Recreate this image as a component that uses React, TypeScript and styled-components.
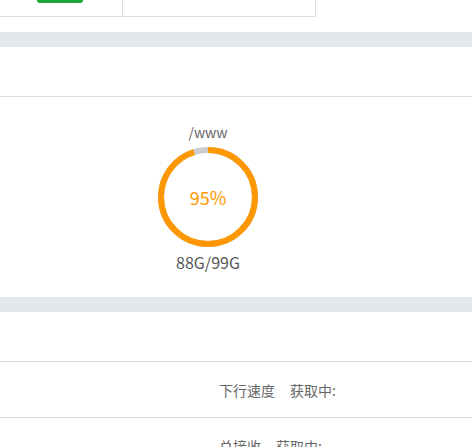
import React from "react";
import styled, { createGlobalStyle } from "styled-components";

const Global = createGlobalStyle`
  html, body { margin: 0; padding: 0; background: #fff; }
  body { font-family: "Noto Sans CJK SC", "Noto Sans", sans-serif; color: #666; }
`;

const Page = styled.div`
  width: 472px;
  height: 447px;
  overflow: hidden;
  display: flex;
  flex-direction: column;
`;

const TopTable = styled.div`
  width: 315px;
  height: 16px;
  display: grid;
  grid-template-columns: 123px 1fr;
  border-bottom: 1px solid #ddd;
  border-right: 1px solid #ddd;
  flex-shrink: 0;
`;

const Cell = styled.div<{ $divider?: boolean }>`
  border-right: ${(p) => (p.$divider ? "1px solid #ddd" : "none")};
`;

const GreenBar = styled.div`
  margin-left: 37px;
  width: 46px;
  height: 3px;
  background: #20a53a;
  border-radius: 0 0 3px 3px;
`;

const Spacer = styled.div<{ $h: number }>`
  height: ${(p) => p.$h}px;
  flex-shrink: 0;
`;

const Band = styled.div`
  height: 15px;
  background: #e4e8ec;
  flex-shrink: 0;
`;

const TitleBar = styled.div<{ $h: number }>`
  height: ${(p) => p.$h}px;
  border-bottom: 1px solid #ddd;
  flex-shrink: 0;
`;

const DiskArea = styled.div`
  height: 200px;
  display: flex;
  flex-direction: column;
  align-items: center;
  flex-shrink: 0;
`;

const DiskItem = styled.div`
  width: 120px;
  margin-left: -56px;
  display: flex;
  flex-direction: column;
  align-items: center;
`;

const DiskPath = styled.div`
  font-size: 14px;
  line-height: 20px;
  margin-top: 25px;
  color: #666;
`;

const Ring = styled.div`
  position: relative;
  width: 100px;
  height: 100px;
  margin-top: 5px;
`;

const RingLabel = styled.div`
  position: absolute;
  inset: 0;
  display: flex;
  align-items: center;
  justify-content: center;
  font-size: 18px;
  color: #ff9800;
`;

const DiskSize = styled.div`
  font-size: 16px;
  line-height: 20px;
  margin-top: 5px;
  color: #555;
`;

const NetRow = styled.div<{ $h: number }>`
  height: ${(p) => p.$h}px;
  border-bottom: 1px solid #ddd;
  display: flex;
  align-items: center;
  padding-left: 219px;
  font-size: 14px;
  color: #666;
  flex-shrink: 0;
`;

const Label = styled.span`
  margin-right: 15px;
`;

function DiskRing({ pct }: { pct: number }) {
  const r = 47;
  const c = 2 * Math.PI * r;
  return (
    <Ring>
      <svg width="100" height="100" viewBox="0 0 100 100">
        <circle cx="50" cy="50" r={r} fill="none" stroke="#cccccc" strokeWidth="6" />
        <circle
          cx="50"
          cy="50"
          r={r}
          fill="none"
          stroke="#ff9800"
          strokeWidth="6"
          strokeDasharray={`${(c * pct) / 100} ${c}`}
          transform="rotate(-90 50 50)"
        />
      </svg>
      <RingLabel>{pct}%</RingLabel>
    </Ring>
  );
}

export default function App() {
  return (
    <Page>
      <Global />
      <TopTable>
        <Cell $divider>
          <GreenBar />
        </Cell>
        <Cell />
      </TopTable>
      <Spacer $h={15} />
      <Band />
      <TitleBar $h={49} />
      <DiskArea>
        <DiskItem>
          <DiskPath>/www</DiskPath>
          <DiskRing pct={95} />
          <DiskSize>88G/99G</DiskSize>
        </DiskItem>
      </DiskArea>
      <Band />
      <TitleBar $h={49} />
      <NetRow $h={55}>
        <Label>下行速度</Label>
        <span>获取中:</span>
      </NetRow>
      <NetRow $h={55}>
        <Label>总接收</Label>
        <span>获取中:</span>
      </NetRow>
    </Page>
  );
}
